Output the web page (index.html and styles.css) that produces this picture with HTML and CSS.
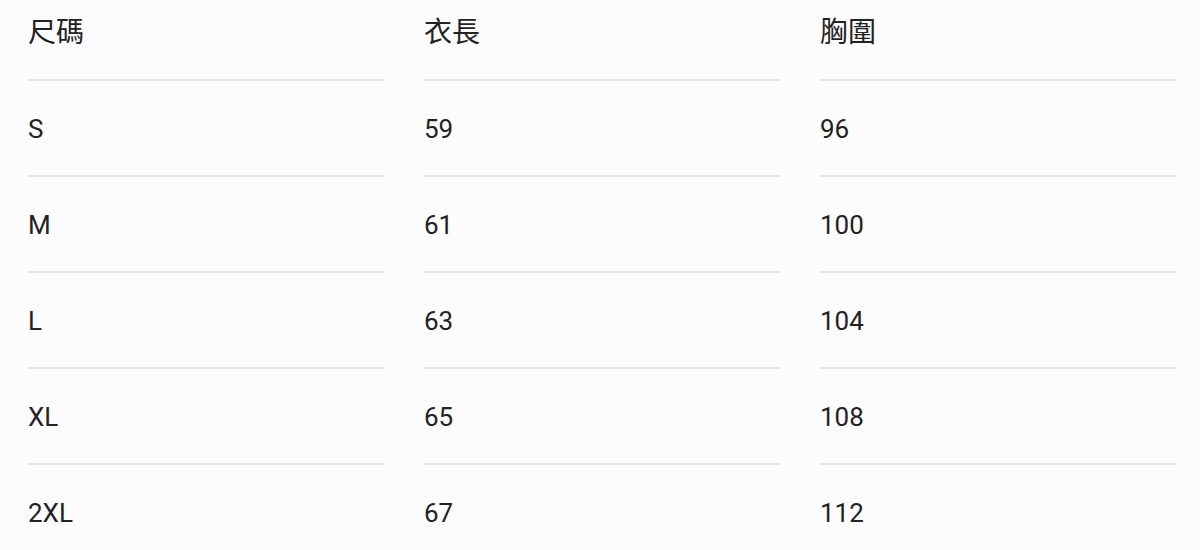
FILE: index.html
```html
<!DOCTYPE html>
<html lang="zh-Hant">
<head>
<meta charset="utf-8">
<link rel="stylesheet" href="styles.css">
</head>
<body>
<div class="size-table">
  <div class="cell head">尺碼</div>
  <div class="cell head">衣長</div>
  <div class="cell head">胸圍</div>
  <div class="cell">S</div>
  <div class="cell">59</div>
  <div class="cell">96</div>
  <div class="cell">M</div>
  <div class="cell">61</div>
  <div class="cell">100</div>
  <div class="cell">L</div>
  <div class="cell">63</div>
  <div class="cell">104</div>
  <div class="cell">XL</div>
  <div class="cell">65</div>
  <div class="cell">108</div>
  <div class="cell last">2XL</div>
  <div class="cell last">67</div>
  <div class="cell last">112</div>
</div>
</body>
</html>
```
FILE: styles.css
```css
html, body {
  margin: 0;
  padding: 0;
  background: #fcfcfc;
}
body {
  font-family: Roboto, "Noto Sans CJK TC", sans-serif;
  color: #222222;
  width: 1200px;
  height: 550px;
  overflow: hidden;
}
.size-table {
  display: grid;
  grid-template-columns: repeat(3, 1fr);
  column-gap: 40px;
  padding: 0 24px 0 28px;
}
.cell {
  font-size: 26px;
  line-height: 32px;
  padding: 32px 0 30px;
  border-bottom: 2px solid #e6e6e6;
}
.cell.head {
  font-size: 28px;
  padding: 17px 0 30px;
}
.cell.last {
  border-bottom: none;
}
```
